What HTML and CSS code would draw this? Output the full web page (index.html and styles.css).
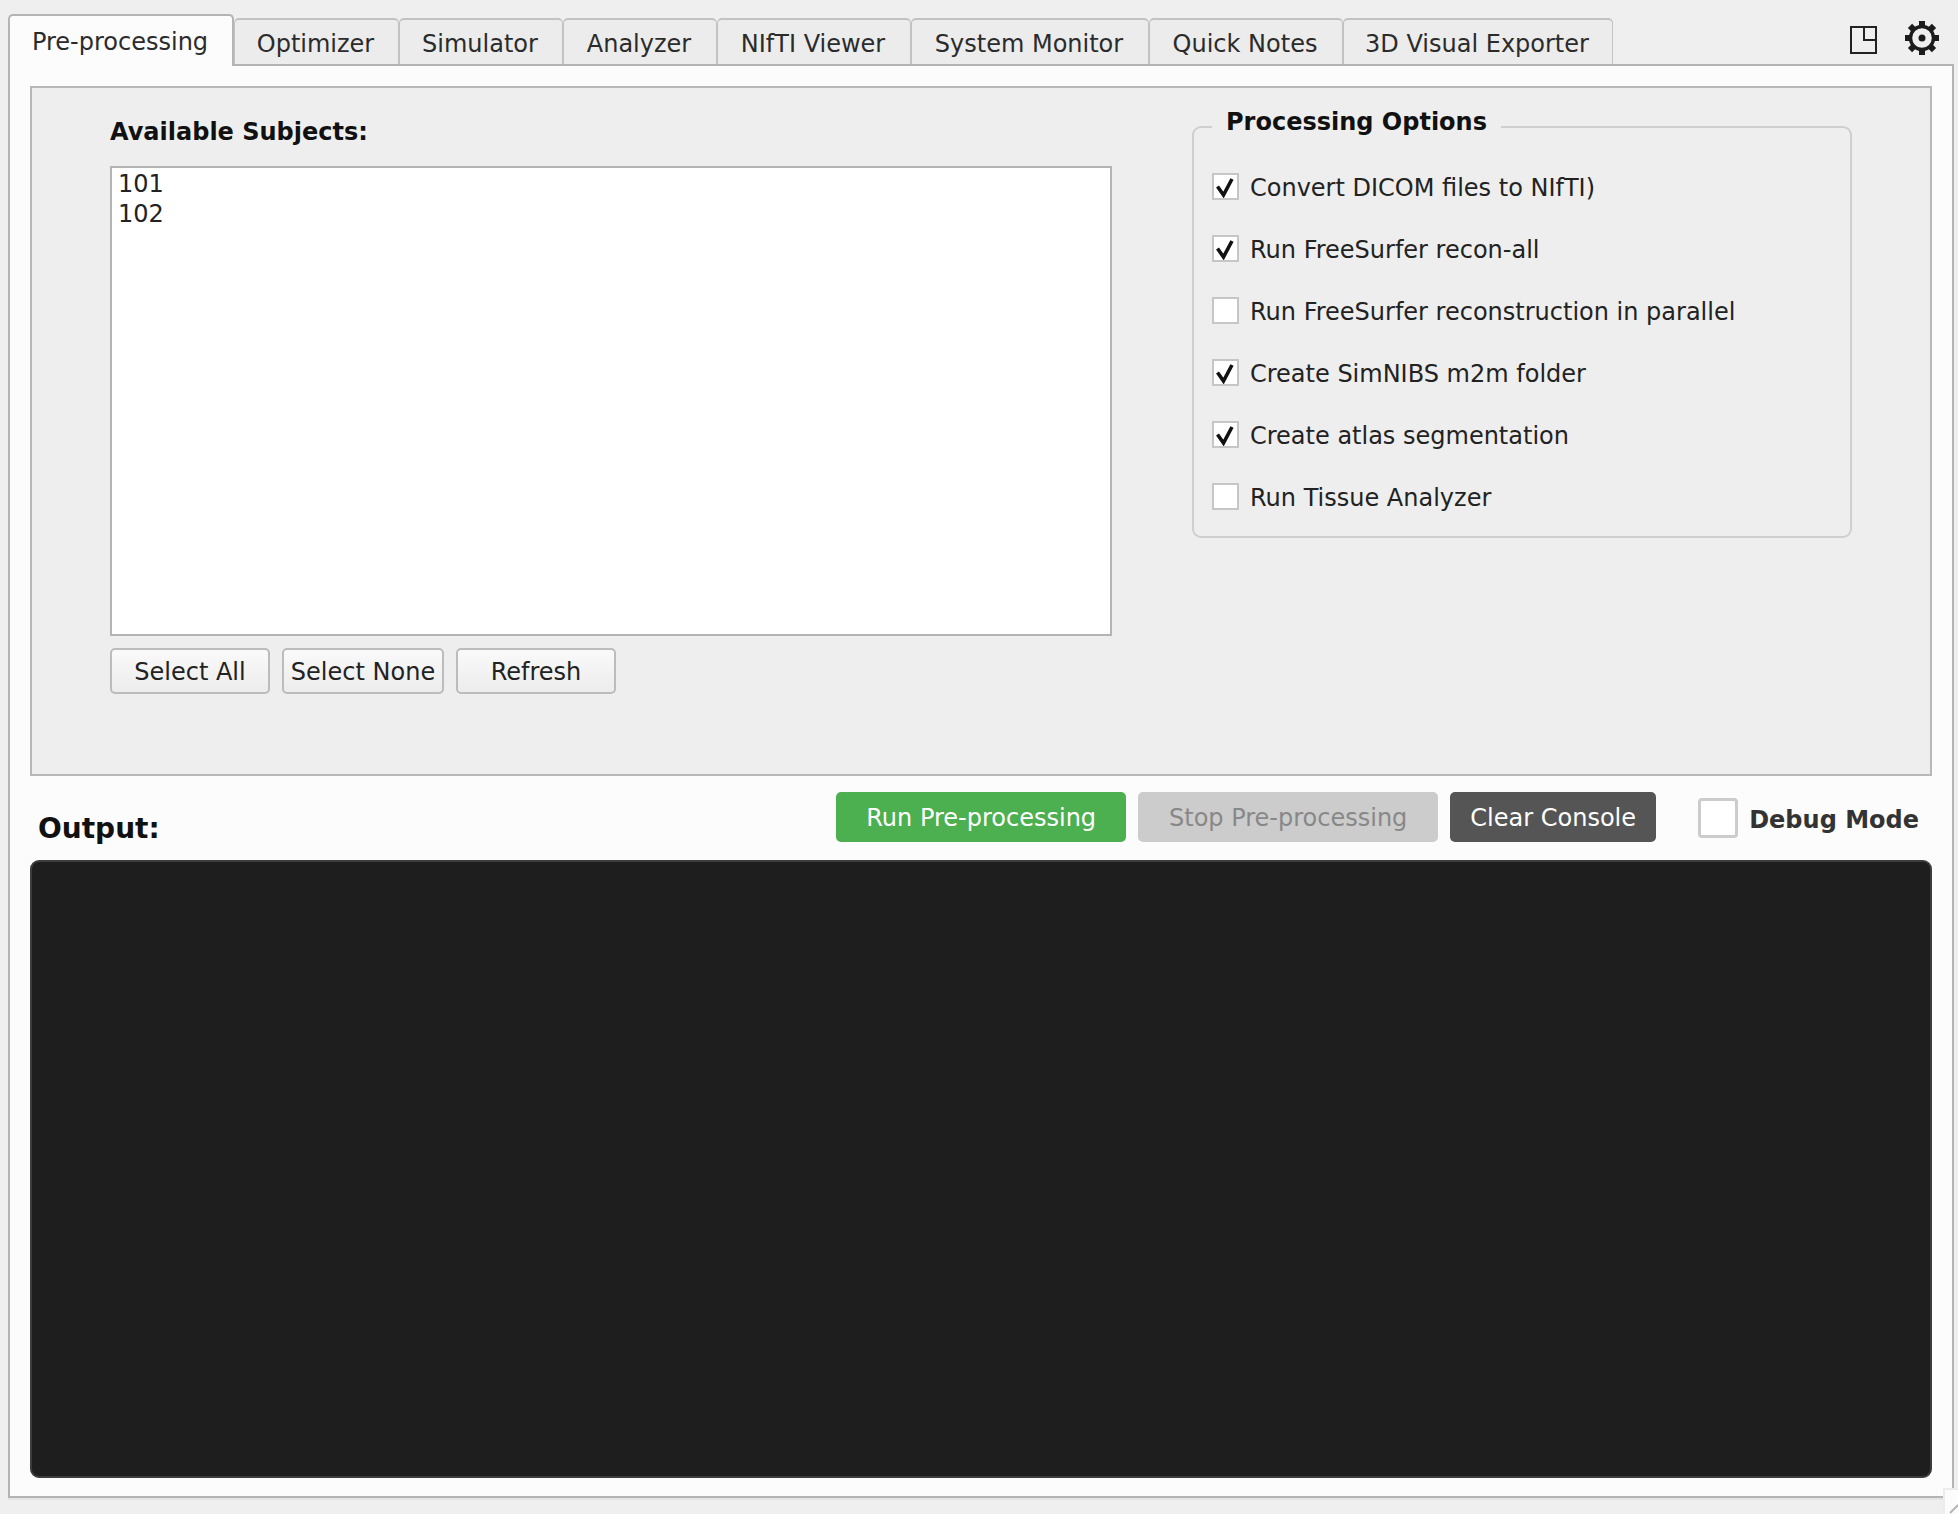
FILE: index.html
```html
<!DOCTYPE html>
<html lang="en">
<head>
<meta charset="utf-8">
<title>Pre-processing</title>
<link rel="stylesheet" href="styles.css">
</head>
<body>
<div class="app">
  <div class="tabbar">
    <div class="tabs">
      <div class="tab active t0">Pre-processing</div>
      <div class="tab t1">Optimizer</div>
      <div class="tab t2">Simulator</div>
      <div class="tab t3">Analyzer</div>
      <div class="tab t4">NIfTI Viewer</div>
      <div class="tab t5">System Monitor</div>
      <div class="tab t6">Quick Notes</div>
      <div class="tab t7">3D Visual Exporter</div>
    </div>
    <div class="corner">
      <svg class="ico-split" width="27" height="28" viewBox="0 0 27 28"><path d="M1 1H26V27H1Z M14 1V14H26" fill="none" stroke="#222" stroke-width="2"/></svg>
      <svg class="ico-gear" width="36" height="36" viewBox="0 0 36 36"><g fill="#1c1c1c"><rect x="15" y="1" width="6" height="6"/><rect x="15" y="29" width="6" height="6"/><rect x="1" y="15" width="6" height="6"/><rect x="29" y="15" width="6" height="6"/><rect x="15" y="1" width="6" height="6" transform="rotate(45 18 18)"/><rect x="15" y="29" width="6" height="6" transform="rotate(45 18 18)"/><rect x="1" y="15" width="6" height="6" transform="rotate(45 18 18)"/><rect x="29" y="15" width="6" height="6" transform="rotate(45 18 18)"/></g><circle cx="18" cy="18" r="11.5" fill="none" stroke="#1c1c1c" stroke-width="3.4"/><circle cx="18" cy="18" r="3.5" fill="#1c1c1c"/></svg>
    </div>
  </div>
  <div class="pane">
    <div class="panel">
      <div class="subjects">
        <div class="subjects-label">Available Subjects:</div>
        <div class="listbox"><div>101</div><div>102</div></div>
        <div class="list-buttons">
          <div class="btn b-all">Select All</div>
          <div class="btn b-none">Select None</div>
          <div class="btn b-refresh">Refresh</div>
        </div>
      </div>
      <fieldset class="options">
        <legend>Processing Options</legend>
        <div class="opt"><span class="cb on"><svg width="23" height="23" viewBox="0 0 23 23"><path d="M3.5 11.5 L9.5 20 L18 4" fill="none" stroke="#111" stroke-width="3.6"/></svg></span>Convert DICOM files to NIfTI)</div>
        <div class="opt"><span class="cb on"><svg width="23" height="23" viewBox="0 0 23 23"><path d="M3.5 11.5 L9.5 20 L18 4" fill="none" stroke="#111" stroke-width="3.6"/></svg></span>Run FreeSurfer recon-all</div>
        <div class="opt"><span class="cb"></span>Run FreeSurfer reconstruction in parallel</div>
        <div class="opt"><span class="cb on"><svg width="23" height="23" viewBox="0 0 23 23"><path d="M3.5 11.5 L9.5 20 L18 4" fill="none" stroke="#111" stroke-width="3.6"/></svg></span>Create SimNIBS m2m folder</div>
        <div class="opt"><span class="cb on"><svg width="23" height="23" viewBox="0 0 23 23"><path d="M3.5 11.5 L9.5 20 L18 4" fill="none" stroke="#111" stroke-width="3.6"/></svg></span>Create atlas segmentation</div>
        <div class="opt"><span class="cb"></span>Run Tissue Analyzer</div>
      </fieldset>
    </div>
    <div class="output-bar">
      <div class="output-label">Output:</div>
      <div class="output-actions">
        <div class="act run">Run Pre-processing</div>
        <div class="act stop">Stop Pre-processing</div>
        <div class="act clear">Clear Console</div>
        <div class="debug"><span class="dbg-box"></span><span class="dbg-text">Debug Mode</span></div>
      </div>
    </div>
    <div class="console"></div>
  </div>
  <div class="grip"><svg width="13" height="24" viewBox="0 0 13 24"><path d="M5 23 L13 15" stroke="#b4b4b4" stroke-width="2" fill="none"/></svg></div>
</div>
</body>
</html>
```
FILE: styles.css
```css
* { box-sizing: border-box; }
html, body { margin: 0; height: 100%; }
body { background: #efefef; font-family: "DejaVu Sans", sans-serif; font-size: 24px; color: #222; overflow: hidden; }
.app { position: relative; width: 1958px; height: 1514px; padding: 14px 4px 0 8px; }
.tabbar { display: flex; height: 50px; justify-content: space-between; }
.tabs { display: flex; align-items: flex-end; }
.tab { height: 46px; display: flex; align-items: center; justify-content: center; padding: 4px 2px 0 0; border: 2px solid #c2c2c2; border-bottom: 0; border-left-width: 1px; border-right-width: 1px; border-radius: 5px 5px 0 0; background: #ececec; color: #2b2b2b; position: relative; }
.tab.active { height: 52px; margin-bottom: -2px; background: #fcfcfc; border: 2px solid #b4b4b4; border-bottom: 0; padding: 2px 2px 0 0; z-index: 2; }
.t0 { width: 226px; } .t1 { width: 165px; } .t2 { width: 164px; } .t3 { width: 154px; }
.t4 { width: 194px; } .t5 { width: 238px; } .t6 { width: 194px; } .t7 { width: 270px; }
.corner { display: flex; align-items: flex-start; gap: 27px; padding: 6px 14px 0 0; }
.ico-split { margin-top: 6px; }
.pane { height: 1434px; border: 2px solid #b4b4b4; background: #fcfcfc; padding: 20px 20px 0 20px; box-shadow: 0 2px 0 #e4e4e4; }
.panel { height: 690px; background: #eeeeee; border: 2px solid #b8b8b8; display: flex; padding: 0 0 0 78px; }
.subjects { width: 1003px; padding-top: 30px; }
.subjects-label { font-weight: 700; height: 48px; line-height: 28px; color: #111; }
.listbox { width: 1002px; height: 470px; background: #fff; border: 2px solid #b4b4b4; padding: 1px 5px 0 6px; line-height: 30px; color: #222; }
.list-buttons { display: flex; gap: 12px; margin-top: 12px; }
.btn { height: 46px; padding-top: 1px; display: flex; align-items: center; justify-content: center; border: 2px solid #bcbcbc; border-radius: 5px; background: linear-gradient(#fafafa, #ececec); color: #222; }
.b-all { width: 160px; } .b-none { width: 162px; } .b-refresh { width: 160px; }
.options { margin: 23px 0 0 79px; width: 660px; height: 427px; padding: 13px 0 0 18px; border: 2px solid #cfcfcf; border-radius: 9px; }
.options legend { margin-left: 0; padding: 0 14px 10px; font-weight: 700; color: #111; height: 32px; line-height: 22px; }
.opt { height: 62px; padding-top: 2px; display: flex; align-items: center; gap: 11px; color: #222; }
.cb { width: 27px; height: 27px; margin-bottom: 4px; background: #fff; border: 2px solid #c6c6c6; display: flex; align-items: center; justify-content: center; }
.output-bar { height: 84px; display: flex; justify-content: space-between; padding-right: 13px; }
.output-label { font-size: 28px; line-height: 33px; font-weight: 700; color: #111; padding: 36px 0 0 8px; }
.output-actions { display: flex; align-items: flex-start; padding-top: 16px; }
.act { height: 50px; padding-top: 2px; display: flex; align-items: center; justify-content: center; border-radius: 5px; }
.run { width: 290px; background: #4caf50; color: #fff; margin-right: 12px; }
.stop { width: 300px; background: #cccccc; color: #888; margin-right: 12px; }
.clear { width: 206px; background: #555555; color: #fff; margin-right: 42px; }
.debug { display: flex; align-items: center; gap: 11px; height: 40px; margin-top: 6px; font-weight: 700; color: #333; }
.dbg-text { padding-top: 4px; }
.dbg-box { width: 40px; height: 40px; background: #fff; border: 3px solid #cccccc; border-radius: 4px; }
.console { height: 618px; background: #1e1e1e; border: 2px solid #3c3c3c; border-radius: 9px; }
.grip { position: absolute; left: 1943px; top: 1488px; width: 15px; height: 26px; background: #fcfcfc; border-left: 2px solid #ececec; border-top: 2px solid #ececec; }
.grip svg { display: block; }
```
